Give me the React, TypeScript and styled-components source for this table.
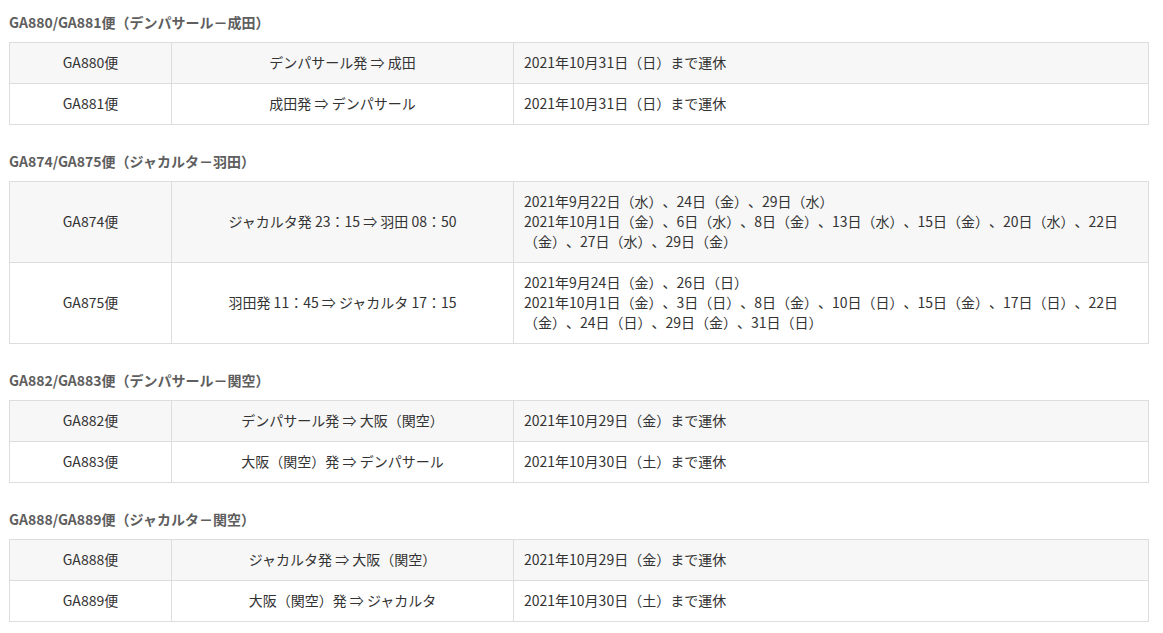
import styled, { createGlobalStyle } from "styled-components";

type Flight = {
  no: string;
  route: string;
  status: string[];
};

type Section = {
  title: string;
  flights: Flight[];
};

const SECTIONS: Section[] = [
  {
    title: "GA880/GA881便（デンパサール－成田）",
    flights: [
      { no: "GA880便", route: "デンパサール発 ⇒ 成田", status: ["2021年10月31日（日）まで運休"] },
      { no: "GA881便", route: "成田発 ⇒ デンパサール", status: ["2021年10月31日（日）まで運休"] },
    ],
  },
  {
    title: "GA874/GA875便（ジャカルタ－羽田）",
    flights: [
      {
        no: "GA874便",
        route: "ジャカルタ発 23：15 ⇒ 羽田 08：50",
        status: [
          "2021年9月22日（水）、24日（金）、29日（水）",
          "2021年10月1日（金）、6日（水）、8日（金）、13日（水）、15日（金）、20日（水）、22日（金）、27日（水）、29日（金）",
        ],
      },
      {
        no: "GA875便",
        route: "羽田発 11：45 ⇒ ジャカルタ 17：15",
        status: [
          "2021年9月24日（金）、26日（日）",
          "2021年10月1日（金）、3日（日）、8日（金）、10日（日）、15日（金）、17日（日）、22日（金）、24日（日）、29日（金）、31日（日）",
        ],
      },
    ],
  },
  {
    title: "GA882/GA883便（デンパサール－関空）",
    flights: [
      { no: "GA882便", route: "デンパサール発 ⇒ 大阪（関空）", status: ["2021年10月29日（金）まで運休"] },
      { no: "GA883便", route: "大阪（関空）発 ⇒ デンパサール", status: ["2021年10月30日（土）まで運休"] },
    ],
  },
  {
    title: "GA888/GA889便（ジャカルタ－関空）",
    flights: [
      { no: "GA888便", route: "ジャカルタ発 ⇒ 大阪（関空）", status: ["2021年10月29日（金）まで運休"] },
      { no: "GA889便", route: "大阪（関空）発 ⇒ ジャカルタ", status: ["2021年10月30日（土）まで運休"] },
    ],
  },
];

export default function App() {
  return (
    <>
      <GlobalStyle />
      <Page>
        {SECTIONS.map((section) => (
          <Block key={section.title}>
            <Heading>{section.title}</Heading>
            <Table>
              <colgroup>
                <col style={{ width: 162 }} />
                <col style={{ width: 342 }} />
                <col />
              </colgroup>
              <tbody>
                {section.flights.map((flight) => (
                  <Row key={flight.no}>
                    <Cell $center>{flight.no}</Cell>
                    <Cell $center>{flight.route}</Cell>
                    <Cell>
                      {flight.status.map((line) => (
                        <StatusLine key={line}>{line}</StatusLine>
                      ))}
                    </Cell>
                  </Row>
                ))}
              </tbody>
            </Table>
          </Block>
        ))}
      </Page>
    </>
  );
}

const GlobalStyle = createGlobalStyle`
  html,
  body {
    margin: 0;
    padding: 0;
    background: #ffffff;
  }
`;

const Page = styled.div`
  display: flex;
  flex-direction: column;
  gap: 26px;

  padding: 12px 0 0 9px;

  font-family: "Noto Sans CJK JP", "Noto Sans", sans-serif;
  font-size: 14px;
  line-height: 20px;
  color: #333333;
  text-spacing-trim: space-all;
`;

const Block = styled.section`
  display: flex;
  flex-direction: column;
  gap: 10px;
`;

const Heading = styled.h3`
  margin: 0;

  font-size: 14px;
  font-weight: 700;
  line-height: 20px;

  color: #5e5e5e;
`;

const Table = styled.table`
  width: 1140px;

  table-layout: fixed;
  border-collapse: collapse;
`;

const Row = styled.tr`
  &:nth-child(odd) {
    background-color: #f7f7f7;
  }

  &:nth-child(even) {
    background-color: #ffffff;
  }
`;

const Cell = styled.td<{ $center?: boolean }>`
  padding: 9px 10px 11px;

  border: 1px solid #dddddd;

  text-align: ${(p) => (p.$center ? "center" : "left")};
  vertical-align: middle;
`;

const StatusLine = styled.div`
  line-break: strict;
`;
